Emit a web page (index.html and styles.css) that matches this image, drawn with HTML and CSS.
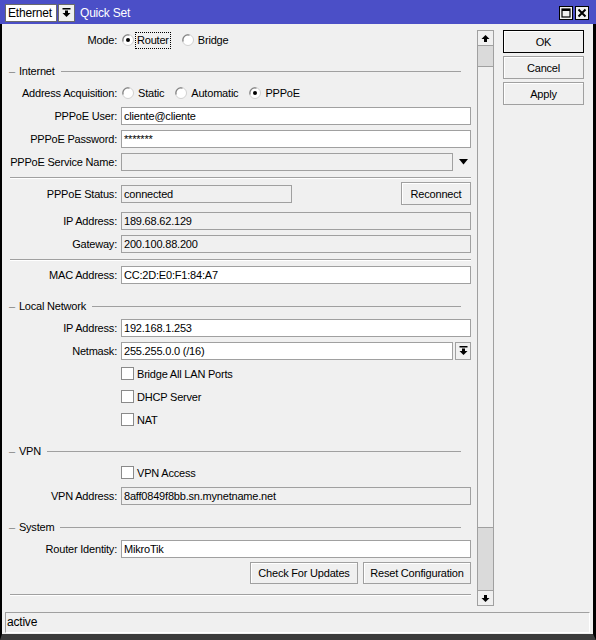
FILE: index.html
```html
<!DOCTYPE html>
<html lang="en">
  <head>
    <meta charset="UTF-8" />
    <title>Quick Set</title>
    <link rel="stylesheet" href="styles.css">
  </head>
  <body>
    <div class="window">
      <div class="titlebar">
        <div class="mode-select">Ethernet</div>
        <div class="mode-btn">
          <svg width="9" height="9" viewBox="0 0 9 9"><rect x="0.5" y="0" width="8" height="1.5" fill="#000"/><polygon points="3,2.5 6,2.5 6,5 8.5,5 4.5,9 0.5,5 3,5" fill="#000"/></svg>
        </div>
        <div class="title">Quick Set</div>
        <div class="win-btns">
          <div class="win-btn">
            <svg width="10" height="10" viewBox="0 0 10 10"><rect x="1" y="1" width="8" height="8" fill="none" stroke="#000" stroke-width="1.2"/><rect x="1" y="1" width="8" height="2" fill="#000"/></svg>
          </div>
          <div class="win-btn">
            <svg width="10" height="10" viewBox="0 0 10 10"><path d="M1.5 1.5 L8.5 8.5 M8.5 1.5 L1.5 8.5" stroke="#000" stroke-width="2"/></svg>
          </div>
        </div>
      </div>

      <div class="frame">
        <div class="main">
          <div class="form">
            <div class="row mode-row">
              <label>Mode:</label>
              <div class="options">
                <span class="opt">
                  <svg class="radio" width="12" height="12" viewBox="0 0 12 12"><circle cx="6" cy="6" r="5.5" fill="#fff" stroke="#d0d0d0"/><path d="M1.2 7.5 A5 5 0 0 1 7.5 1.2" fill="none" stroke="#808080" stroke-width="1.2"/><circle cx="6" cy="6" r="2" fill="#000"/></svg>
                  <span class="focus">Router</span>
                </span>
                <span class="opt">
                  <svg class="radio" width="12" height="12" viewBox="0 0 12 12"><circle cx="6" cy="6" r="5.5" fill="#fff" stroke="#d0d0d0"/><path d="M1.2 7.5 A5 5 0 0 1 7.5 1.2" fill="none" stroke="#808080" stroke-width="1.2"/></svg>
                  Bridge
                </span>
              </div>
            </div>

            <div class="group first"><span class="dash">&ndash;</span>Internet</div>
            <div class="row">
              <label>Address Acquisition:</label>
              <div class="options">
                <span class="opt">
                  <svg class="radio" width="12" height="12" viewBox="0 0 12 12"><circle cx="6" cy="6" r="5.5" fill="#fff" stroke="#d0d0d0"/><path d="M1.2 7.5 A5 5 0 0 1 7.5 1.2" fill="none" stroke="#808080" stroke-width="1.2"/></svg>
                  Static
                </span>
                <span class="opt">
                  <svg class="radio" width="12" height="12" viewBox="0 0 12 12"><circle cx="6" cy="6" r="5.5" fill="#fff" stroke="#d0d0d0"/><path d="M1.2 7.5 A5 5 0 0 1 7.5 1.2" fill="none" stroke="#808080" stroke-width="1.2"/></svg>
                  Automatic
                </span>
                <span class="opt">
                  <svg class="radio" width="12" height="12" viewBox="0 0 12 12"><circle cx="6" cy="6" r="5.5" fill="#fff" stroke="#d0d0d0"/><path d="M1.2 7.5 A5 5 0 0 1 7.5 1.2" fill="none" stroke="#808080" stroke-width="1.2"/><circle cx="6" cy="6" r="2" fill="#000"/></svg>
                  PPPoE
                </span>
              </div>
            </div>
            <div class="row">
              <label>PPPoE User:</label>
              <div class="field">cliente@cliente</div>
            </div>
            <div class="row">
              <label>PPPoE Password:</label>
              <div class="field">*******</div>
            </div>
            <div class="row">
              <label>PPPoE Service Name:</label>
              <div class="combo">
                <div class="field readonly"></div>
                <div class="drop">
                  <svg width="9" height="6" viewBox="0 0 9 6"><polygon points="0,0 9,0 4.5,5.5" fill="#000"/></svg>
                </div>
              </div>
            </div>
            <div class="sep"></div>
            <div class="row status-row">
              <label>PPPoE Status:</label>
              <div class="split">
                <div class="field readonly status-field">connected</div>
                <button class="btn">Reconnect</button>
              </div>
            </div>
            <div class="row">
              <label>IP Address:</label>
              <div class="field readonly">189.68.62.129</div>
            </div>
            <div class="row">
              <label>Gateway:</label>
              <div class="field readonly">200.100.88.200</div>
            </div>
            <div class="sep short"></div>
            <div class="row">
              <label>MAC Address:</label>
              <div class="field">CC:2D:E0:F1:84:A7</div>
            </div>

            <div class="group"><span class="dash">&ndash;</span>Local Network</div>
            <div class="row">
              <label>IP Address:</label>
              <div class="field">192.168.1.253</div>
            </div>
            <div class="row">
              <label>Netmask:</label>
              <div class="combo">
                <div class="field">255.255.0.0 (/16)</div>
                <div class="drop boxed">
                  <svg width="9" height="9" viewBox="0 0 9 9"><rect x="0.5" y="0" width="8" height="1.5" fill="#000"/><polygon points="3,2.5 6,2.5 6,5 8.5,5 4.5,9 0.5,5 3,5" fill="#000"/></svg>
                </div>
              </div>
            </div>
            <div class="row">
              <label></label>
              <span class="check"><span class="box"></span>Bridge All LAN Ports</span>
            </div>
            <div class="row">
              <label></label>
              <span class="check"><span class="box"></span>DHCP Server</span>
            </div>
            <div class="row">
              <label></label>
              <span class="check"><span class="box"></span>NAT</span>
            </div>

            <div class="group"><span class="dash">&ndash;</span>VPN</div>
            <div class="row">
              <label></label>
              <span class="check"><span class="box"></span>VPN Access</span>
            </div>
            <div class="row">
              <label>VPN Address:</label>
              <div class="field readonly">8aff0849f8bb.sn.mynetname.net</div>
            </div>

            <div class="group"><span class="dash">&ndash;</span>System</div>
            <div class="row">
              <label>Router Identity:</label>
              <div class="field">MikroTik</div>
            </div>
            <div class="tools">
              <button class="btn wide">Check For Updates</button>
              <button class="btn wide">Reset Configuration</button>
            </div>
            <div class="sep last"></div>
          </div>

          <div class="scroll">
            <div class="arrow">
              <svg width="9" height="7" viewBox="0 0 9 7"><polygon points="4.5,0 8.5,4 6,4 6,7 3,7 3,4 0.5,4" fill="#000"/></svg>
            </div>
            <div class="track">
              <div class="thumb"></div>
            </div>
            <div class="arrow">
              <svg width="9" height="7" viewBox="0 0 9 7"><polygon points="3,0 6,0 6,3 8.5,3 4.5,7 0.5,3 3,3" fill="#000"/></svg>
            </div>
          </div>

          <div class="actions">
            <button class="btn side default">OK</button>
            <button class="btn side">Cancel</button>
            <button class="btn side">Apply</button>
          </div>
        </div>

        <div class="statusbar">active</div>
      </div>
    </div>
  </body>
</html>
```

FILE: styles.css
```css
body {
  margin: 0;
  font-family: "Liberation Sans", Arial, sans-serif;
  font-size: 11px;
  letter-spacing: -0.2px;
  color: #000;
  background: #f0f0f0;
}
.window {
  width: 596px;
  height: 640px;
  display: flex;
  flex-direction: column;
  background: #f0f0f0;
}

/* title bar */
.titlebar {
  height: 24px;
  flex: none;
  background: #4b4fc7;
  display: flex;
  align-items: center;
  padding: 1px 7px 0 5px;
  box-sizing: border-box;
}
.mode-select {
  width: 52px;
  height: 18px;
  box-sizing: border-box;
  background: #fff;
  border: 1px solid #6a6a6a;
  padding: 0 2px;
  line-height: 16px;
  font-size: 12px;
}
.mode-btn {
  width: 17px;
  height: 18px;
  box-sizing: border-box;
  margin-left: 1px;
  background: #f0f0f0;
  border: 1px solid #6a6a6a;
  display: flex;
  align-items: center;
  justify-content: center;
}
.title {
  color: #fff;
  font-size: 12px;
  margin-left: 5px;
}
.win-btns {
  margin-left: auto;
  display: flex;
  gap: 2px;
}
.win-btn {
  width: 14px;
  height: 14px;
  box-sizing: border-box;
  background: #f0f0f0;
  border: 1px solid #000;
  display: flex;
  align-items: center;
  justify-content: center;
}

/* window body */
.frame {
  flex: 1;
  display: flex;
  flex-direction: column;
  border-left: 2px solid #000;
  border-right: 3px solid #000;
  border-bottom: 6px solid #3c3c3c;
}
.main {
  display: flex;
  height: 576px;
  margin-top: 6px;
  padding-left: 1px;
}
.form {
  width: 474px;
  overflow: hidden;
}
.row {
  display: grid;
  grid-template-columns: 114px 1fr;
  column-gap: 4px;
  align-items: center;
  height: 23px;
  padding-right: 6px;
}
.row label {
  text-align: right;
  white-space: nowrap;
}
.mode-row {
  height: 20px;
}
.status-row {
  height: 27px;
  padding-bottom: 4px;
  box-sizing: border-box;
}
.field {
  height: 18px;
  box-sizing: border-box;
  background: #fff;
  border: 1px solid #a0a0a0;
  padding: 0 2px;
  line-height: 16px;
  white-space: nowrap;
  overflow: hidden;
}
.field.readonly {
  background: #f0f0f0;
}
.combo {
  display: flex;
  gap: 2px;
}
.combo .field {
  flex: 1;
}
.drop {
  width: 16px;
  height: 18px;
  box-sizing: border-box;
  display: flex;
  align-items: center;
  justify-content: center;
}
.drop.boxed {
  border: 1px solid #a0a0a0;
  background: #f0f0f0;
}
.split {
  display: flex;
  justify-content: space-between;
  align-items: center;
}
.status-field {
  width: 171px;
}

/* radio buttons and checkboxes */
.options {
  display: flex;
  align-items: center;
  gap: 10px;
}
.opt {
  display: inline-flex;
  align-items: center;
}
.radio {
  margin: 0 4px 0 1px;
}
.focus {
  border: 1px dotted #000;
  padding: 1px 1px;
  margin-left: -3px;
  line-height: 13px;
}
.check {
  display: flex;
  align-items: center;
}
.box {
  width: 13px;
  height: 13px;
  box-sizing: border-box;
  background: #fff;
  border: 1px solid #8a8a8a;
  margin-right: 3px;
}

/* group headers and separators */
.group {
  display: flex;
  align-items: center;
  height: 20px;
  margin-top: 10px;
  padding-left: 6px;
}
.group.first {
  margin-top: 11px;
}
.group::after {
  content: "";
  flex: 1;
  border-top: 1px solid #a0a0a0;
  margin: 1px 16px 0 6px;
}
.dash {
  color: #808080;
  margin-right: 4px;
}
.sep {
  height: 9px;
  margin: 0 6px 0 7px;
  box-sizing: border-box;
  padding-top: 4px;
}
.sep.short {
  height: 8px;
}
.sep::before {
  content: "";
  display: block;
  border-top: 1px solid #a0a0a0;
  border-bottom: 1px solid #fff;
}

/* buttons */
.btn {
  font-family: inherit;
  font-size: 11px;
  letter-spacing: -0.2px;
  height: 23px;
  background: #f0f0f0;
  border: 1px solid #a0a0a0;
  box-shadow: inset 1px 1px #fff;
  padding: 0;
  color: #000;
}
.split .btn {
  width: 70px;
}
.tools {
  display: flex;
  justify-content: flex-end;
  gap: 5px;
  padding: 2px 6px 0 0;
  height: 24px;
}
.btn.wide {
  width: 108px;
  height: 22px;
}
.sep.last {
  margin-top: 4px;
}

/* scrollbar */
.scroll {
  width: 17px;
  display: flex;
  flex-direction: column;
  box-sizing: border-box;
  border-left: 1px solid #a0a0a0;
  border-right: 1px solid #a0a0a0;
}
.arrow {
  height: 16px;
  box-sizing: border-box;
  border: 1px solid #a0a0a0;
  margin: 0 -1px;
  background: #f0f0f0;
  display: flex;
  align-items: center;
  justify-content: center;
}
.track {
  flex: 1;
  background: #dadada;
  padding-top: 20px;
}
.thumb {
  height: 462px;
  box-sizing: border-box;
  background: #f0f0f0;
  border: 1px solid #a0a0a0;
  margin: 0 -1px;
}

/* side buttons */
.actions {
  display: flex;
  flex-direction: column;
  gap: 3px;
  margin-left: 9px;
}
.btn.side {
  width: 81px;
}
.btn.default {
  border-color: #000;
}

/* status bar */
.statusbar {
  height: 21px;
  margin: 6px 3px 0 3px;
  box-sizing: border-box;
  border-top: 1px solid #a0a0a0;
  border-left: 1px solid #a0a0a0;
  border-right: 1px solid #fff;
  border-bottom: 1px solid #fff;
  padding-left: 1px;
  line-height: 19px;
  font-size: 12px;
}
```
